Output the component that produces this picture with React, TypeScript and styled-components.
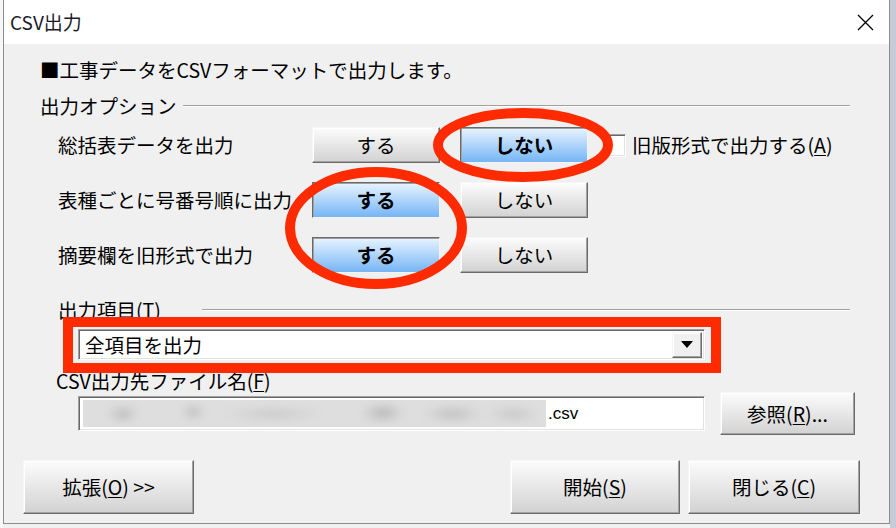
import React from 'react';
import styled, { createGlobalStyle, css } from 'styled-components';

const GlobalStyle = createGlobalStyle`
  html, body {
    margin: 0;
    padding: 0;
  }
  body {
    width: 896px;
    height: 528px;
    overflow: hidden;
    font-family: 'Noto Sans CJK JP', 'Noto Sans', sans-serif;
    color: #000;
  }
  * { box-sizing: border-box; }
`;

const Page = styled.div`
  position: relative;
  width: 896px;
  height: 528px;
  background: linear-gradient(90deg, #f7f7f7 0 3px, #f0f0f0 3px 890px, #c6cbd7 890px);
`;

const Window = styled.div`
  margin-left: 3px;
  width: 887px;
  height: 524px;
  border: 1px solid #8c8c8c;
  border-top: none;
  background: #f0f0f0;
  display: flex;
  flex-direction: column;
`;

const TitleBar = styled.div`
  height: 44px;
  flex-shrink: 0;
  background: #fff;
  display: flex;
  align-items: center;
  justify-content: space-between;
  padding-left: 6px;
`;

const Title = styled.span`
  font-size: 19px;
  line-height: 24px;
  color: #1a1a2a;
`;

const CloseButton = styled.div`
  width: 48px;
  height: 44px;
  display: flex;
  align-items: center;
  justify-content: center;
`;

const Body = styled.div`
  flex: 1;
  display: flex;
  flex-direction: column;
  padding: 14px 39px 0 36px;
  font-size: 19.5px;
  line-height: 24px;
`;

const Intro = styled.div`
  white-space: nowrap;
`;

const SectionHeader = styled.div<{ $top: number; $indent: number }>`
  display: flex;
  align-items: center;
  margin-top: ${p => p.$top}px;
  margin-left: ${p => p.$indent}px;
`;

const SectionTitle = styled.span<{ $width: number }>`
  width: ${p => p.$width}px;
  flex-shrink: 0;
  white-space: nowrap;
`;

const Rule = styled.div`
  flex: 1;
  height: 2px;
  border-top: 1px solid #a0a0a0;
  border-bottom: 1px solid #fff;
`;

const OptionRow = styled.div<{ $top: number }>`
  display: flex;
  align-items: center;
  height: 36px;
  margin-top: ${p => p.$top}px;
  margin-left: 18px;
`;

const OptionLabel = styled.span`
  width: 254px;
  flex-shrink: 0;
  white-space: nowrap;
`;

const raised = css`
  border: 1px solid;
  border-color: #f6f6f6 #6a6a6a #6a6a6a #f6f6f6;
  box-shadow: inset -1px -1px 0 #a3a3a3, inset 1px 1px 0 #fff;
  background: linear-gradient(#fcfcfc, #d2d2d2);
`;

const PushButton = styled.div<{ $width: number; $height: number }>`
  ${raised};
  width: ${p => p.$width}px;
  height: ${p => p.$height}px;
  flex-shrink: 0;
  display: flex;
  align-items: center;
  justify-content: center;
  white-space: nowrap;
  font-size: 19.5px;
`;

const ToggleButton = styled.div<{ $active?: boolean }>`
  width: 128px;
  height: 36px;
  flex-shrink: 0;
  display: flex;
  align-items: center;
  justify-content: center;
  font-size: 19.5px;
  ${p =>
    p.$active
      ? css`
          border: 1px solid;
          border-color: #6a6a6a #f4f4f4 #f4f4f4 #6a6a6a;
          box-shadow: inset 1px 1px 0 #a0a0a0;
          background: linear-gradient(#e8f4ff, #76b5f6);
          font-weight: 700;
        `
      : raised}
  & + & {
    margin-left: 20px;
  }
`;

const sunken = css`
  border: 1px solid;
  border-color: #a0a0a0 #fff #fff #a0a0a0;
  box-shadow: inset 1px 1px 0 #696969, inset -1px -1px 0 #e3e3e3;
  background: #fff;
`;

const Checkbox = styled.div`
  ${sunken};
  width: 23px;
  height: 23px;
  margin-left: 15px;
  flex-shrink: 0;
`;

const CheckLabel = styled.span`
  margin-left: 6px;
  white-space: nowrap;
`;

const Key = styled.span`
  text-decoration: underline;
  text-underline-offset: 2px;
  text-decoration-thickness: 1px;
`;

const ComboBox = styled.div`
  ${sunken};
  margin-top: 7px;
  margin-left: 38px;
  width: 627px;
  height: 31px;
  flex-shrink: 0;
  display: flex;
  align-items: center;
  padding: 0 2px 0 6px;
`;

const ComboText = styled.span`
  flex: 1;
`;

const ComboArrow = styled.div`
  ${raised};
  background: #f0f0f0;
  width: 30px;
  height: 26px;
  display: flex;
  align-items: center;
  justify-content: center;
`;

const FieldLabel = styled.div`
  margin-top: 9px;
  margin-left: 16px;
  white-space: nowrap;
`;

const FieldRow = styled.div`
  margin-top: -1px;
  margin-left: 38px;
  margin-right: -5px;
  display: flex;
  align-items: center;
  gap: 15px;
`;

const TextField = styled.div`
  ${sunken};
  width: 627px;
  height: 35px;
  flex-shrink: 0;
  display: flex;
  align-items: center;
  padding-left: 4px;
`;

const Redacted = styled.div`
  width: 463px;
  height: 27px;
  flex-shrink: 0;
  overflow: hidden;
  background: #dedede;
`;

const Smudge = styled.div`
  width: 100%;
  height: 100%;
  filter: blur(4px);
  background:
    radial-gradient(ellipse 16px 8px at 40px 14px, #b4b4b4, transparent),
    radial-gradient(ellipse 12px 8px at 110px 12px, #b8b8b8, transparent),
    radial-gradient(ellipse 50px 6px at 190px 14px, #c2c2c2, transparent),
    radial-gradient(ellipse 22px 9px at 300px 13px, #b0b0b0, transparent),
    radial-gradient(ellipse 30px 8px at 370px 14px, #bababa, transparent),
    radial-gradient(ellipse 26px 7px at 430px 14px, #c0c0c0, transparent);
`;

const Extension = styled.span`
  font-family: 'Liberation Sans', Arial, sans-serif;
  font-size: 17px;
  margin-left: 2px;
`;

const BottomRow = styled.div`
  margin-top: 25px;
  margin-left: -17px;
  margin-right: -10px;
  display: flex;
  gap: 8px;
`;

const Spacer = styled.div`
  flex: 1;
`;

const Annotations = styled.svg`
  position: absolute;
  inset: 0;
  pointer-events: none;
`;

const RED = '#fe2a00';

export default function App() {
  return (
    <Page>
      <GlobalStyle />
      <Window>
        <TitleBar>
          <Title>CSV出力</Title>
          <CloseButton>
            <svg width="17" height="17" viewBox="0 0 17 17">
              <path d="M1 1L16 16M16 1L1 16" stroke="#000" strokeWidth="1.3" />
            </svg>
          </CloseButton>
        </TitleBar>
        <Body>
          <Intro>■工事データをCSVフォーマットで出力します。</Intro>
          <SectionHeader $top={12} $indent={0}>
            <SectionTitle $width={143}>出力オプション</SectionTitle>
            <Rule />
          </SectionHeader>
          <OptionRow $top={9}>
            <OptionLabel>総括表データを出力</OptionLabel>
            <ToggleButton>する</ToggleButton>
            <ToggleButton $active>しない</ToggleButton>
            <Checkbox />
            <CheckLabel>
              旧版形式で出力する(<Key>A</Key>)
            </CheckLabel>
          </OptionRow>
          <OptionRow $top={19}>
            <OptionLabel>表種ごとに号番号順に出力</OptionLabel>
            <ToggleButton $active>する</ToggleButton>
            <ToggleButton>しない</ToggleButton>
          </OptionRow>
          <OptionRow $top={19}>
            <OptionLabel>摘要欄を旧形式で出力</OptionLabel>
            <ToggleButton $active>する</ToggleButton>
            <ToggleButton>しない</ToggleButton>
          </OptionRow>
          <SectionHeader $top={25} $indent={18}>
            <SectionTitle $width={144}>
              出力項目(<Key>T</Key>)
            </SectionTitle>
            <Rule />
          </SectionHeader>
          <ComboBox>
            <ComboText>全項目を出力</ComboText>
            <ComboArrow>
              <svg width="12" height="7" viewBox="0 0 12 7">
                <path d="M0 0H12L6 7Z" fill="#000" />
              </svg>
            </ComboArrow>
          </ComboBox>
          <FieldLabel>
            CSV出力先ファイル名(<Key>F</Key>)
          </FieldLabel>
          <FieldRow>
            <TextField>
              <Redacted>
                <Smudge />
              </Redacted>
              <Extension>.csv</Extension>
            </TextField>
            <PushButton $width={135} $height={43}>
              参照(<Key>R</Key>)...
            </PushButton>
          </FieldRow>
          <BottomRow>
            <PushButton $width={171} $height={54}>
              拡張(<Key>O</Key>) &gt;&gt;
            </PushButton>
            <Spacer />
            <PushButton $width={170} $height={54}>
              開始(<Key>S</Key>)
            </PushButton>
            <PushButton $width={172} $height={54}>
              閉じる(<Key>C</Key>)
            </PushButton>
          </BottomRow>
        </Body>
      </Window>
      <Annotations width="896" height="528" viewBox="0 0 896 528">
        <ellipse cx="523" cy="145" rx="85" ry="32" fill="none" stroke={RED} strokeWidth="10" />
        <ellipse cx="376" cy="228" rx="86" ry="56" fill="none" stroke={RED} strokeWidth="10" />
        <rect x="68" y="322" width="648" height="46" fill="none" stroke={RED} strokeWidth="10" />
      </Annotations>
    </Page>
  );
}
